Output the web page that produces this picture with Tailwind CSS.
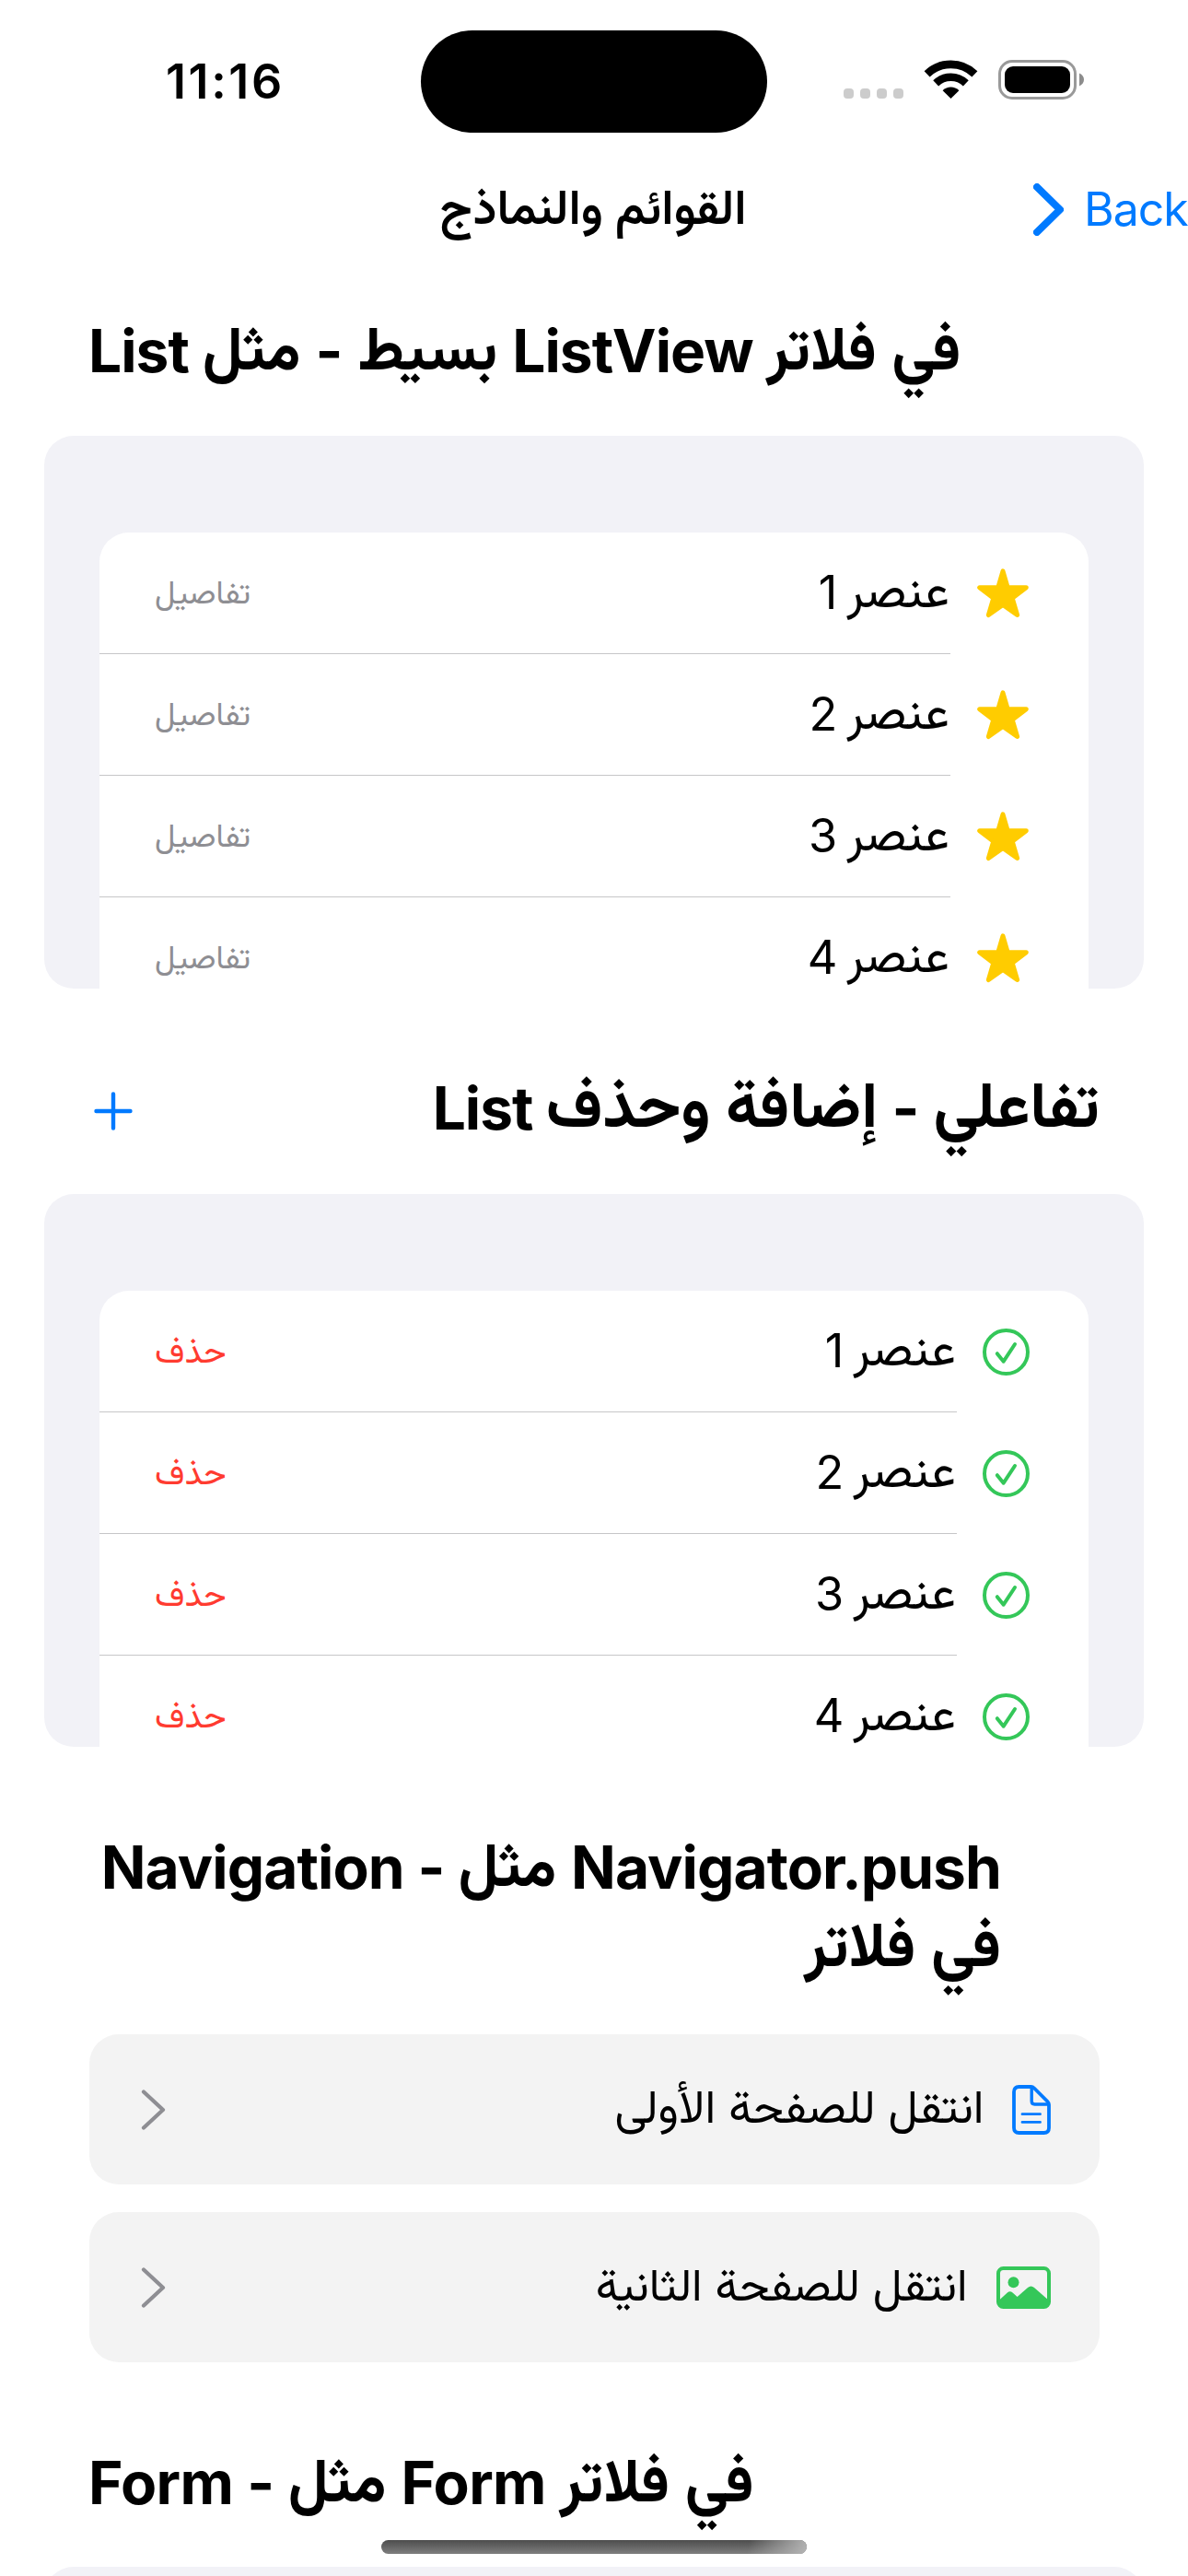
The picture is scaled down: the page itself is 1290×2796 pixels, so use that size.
<!DOCTYPE html>
<html lang="ar">
<head>
<meta charset="utf-8">
<title>القوائم والنماذج</title>
<script src="https://cdn.jsdelivr.net/npm/@tailwindcss/browser@4"></script>
</head>
<body class="bg-white">
<div class="relative flex h-[2796px] w-[1290px] flex-col overflow-hidden bg-white font-[Inter,Vazirmatn,'Noto_Sans',sans-serif] text-black">

  <!-- Status bar -->
  <header class="flex h-[177px] shrink-0 items-start">
    <div class="ml-[180px] mt-[58px] w-[277px] text-[52px] font-semibold leading-[62px] tracking-[2.6px]">11:16</div>
    <div class="mt-[33px] h-[111px] w-[376px] rounded-full bg-black"></div>
    <div class="ml-[83px] mt-[96px] flex gap-[7px]">
      <i class="size-[11px] rounded-[4px] bg-[#cccccc]"></i><i class="size-[11px] rounded-[4px] bg-[#cccccc]"></i><i class="size-[11px] rounded-[4px] bg-[#cccccc]"></i><i class="size-[11px] rounded-[4px] bg-[#cccccc]"></i>
    </div>
    <svg class="ml-[22px] mt-[65px] h-[42px] w-[59px]" viewBox="0 0 59 42" fill="none">
      <path d="M3.6 15.4C18 1.4 41 1.4 55.4 15.4" stroke="#000" stroke-width="8.6"/>
      <path d="M13.2 25.4C22.5 16.6 36.5 16.6 45.8 25.4" stroke="#000" stroke-width="8.6"/>
      <path d="M20.6 33.2C25.6 28.2 33.4 28.2 38.4 33.2L29.5 42Z" fill="#000"/>
    </svg>
    <svg class="ml-[22px] mt-[65px] h-[43px] w-[95px]" viewBox="0 0 95 43" fill="none">
      <rect x="1.5" y="1.5" width="82" height="40" rx="13.5" stroke="#999" stroke-width="3"/>
      <rect x="7" y="7" width="71" height="29" rx="9" fill="#000"/>
      <path d="M88 14.6C91.300 16 93 18.700 93 21.500S91.300 27 88 28.400Z" fill="#8c8c8c"/>
    </svg>
  </header>

  <!-- Navigation bar -->
  <nav class="grid h-[132px] shrink-0 grid-cols-[447px_394px_449px] items-start">
    <span></span>
    <h1 dir="rtl" class="mt-[12px] text-center text-[52.600px] font-semibold leading-[70px] whitespace-nowrap">القوائم والنماذج</h1>
    <a class="flex items-center pl-[281px] pt-[20px] text-[#007aff]">
      <svg class="h-[57px] w-[33px] shrink-0" viewBox="0 0 33 57" fill="none" stroke="#007aff" stroke-width="8" stroke-linecap="round" stroke-linejoin="round"><path d="M4 4L29 28.500L4 53"/></svg>
      <span class="ml-[22px] text-[50px] leading-[60px] tracking-[-1px]">Back</span>
    </a>
  </nav>

  <main class="flex flex-col px-[48px] pt-[29px]">
    <h2 dir="ltr" class="h-[87px] pl-[48px] text-[64px] font-bold leading-[86px] tracking-[-1px] whitespace-nowrap [word-spacing:0.800px]">List <span class="align-[3px] text-[66.500px] leading-[60px] tracking-normal">بسيط</span> - <span class="align-[3px] text-[66.500px] leading-[60px] tracking-normal">مثل</span> ListView <span class="align-[3px] text-[66.500px] leading-[60px] tracking-normal">في فلاتر</span></h2>

    <section id="stars" class="mt-[48px] h-[600px] overflow-hidden rounded-[32px] bg-[#f2f2f7] px-[60px] pt-[105px]">
      <ul dir="rtl" class="rounded-t-[32px] bg-white"></ul>
    </section>

    <div class="mt-[87px] flex h-[87px] items-center justify-between pl-[54px] pr-[48px]">
      <svg class="mt-[5px] size-[42px]" viewBox="0 0 42 42" stroke="#007aff" stroke-width="4.400" stroke-linecap="round"><path d="M2.500 21H39.500M21 2.500V39.500"/></svg>
      <h2 dir="ltr" class="h-[87px] text-[64px] font-bold leading-[86px] tracking-[-1px] whitespace-nowrap">List <span class="align-[3px] text-[69.500px] leading-[60px] tracking-normal">تفاعلي</span> - <span class="align-[3px] text-[69.500px] leading-[60px] tracking-normal">إضافة وحذف</span></h2>
    </div>

    <section id="checks" class="mt-[49px] h-[600px] overflow-hidden rounded-[32px] bg-[#f2f2f7] px-[60px] pt-[105px]">
      <ul dir="rtl" class="rounded-t-[32px] bg-white"></ul>
    </section>

    <h2 dir="ltr" class="mt-[87px] h-[174px] w-[1039px] text-right text-[64px] font-bold leading-[87px] tracking-[-0.900px] whitespace-nowrap [word-spacing:0.600px]">Navigation - <span class="align-[3px] text-[66.500px] leading-[60px] tracking-normal">مثل</span> Navigator.push<br><span class="align-[3px] text-[67.500px] leading-[60px] tracking-normal">في فلاتر</span></h2>

    <div class="mx-[48.500px] mt-[51px] flex flex-col gap-[30px]">
      <a dir="rtl" class="flex h-[163px] items-center rounded-[32px] bg-[#f3f3f3] pl-[56px] pr-[53px]">
        <svg class="h-[54px] w-[42px]" viewBox="0 0 42 54" fill="none" stroke="#007aff" stroke-linecap="round" stroke-linejoin="round">
          <path d="M7.500 2H20.500Q22.500 2 24 3.500L38.500 18Q40 19.500 40 21.500V46.500Q40 52 34.500 52H7.500Q2 52 2 46.500V7.500Q2 2 7.500 2Z" stroke-width="3.800"/>
          <path d="M21.200 3V17.500Q21.200 21 24.500 21H39" stroke-width="3.400"/>
          <path d="M11 31.700H30.500M11 40.400H30.500" stroke-width="2.800"/>
        </svg>
        <span class="mr-[30px] grow pb-[7px] text-[50.300px] leading-[70px]">انتقل للصفحة الأولى</span>
        <svg class="h-[44px] w-[27px]" viewBox="0 0 27 44" fill="none" stroke="#8e8e93" stroke-width="4.200" stroke-linecap="round" stroke-linejoin="round"><path d="M3 2.500L24 22L3 41.500"/></svg>
      </a>
      <a dir="rtl" class="flex h-[163px] items-center rounded-[32px] bg-[#f3f3f3] pl-[56px] pr-[53px]">
        <svg class="h-[46px] w-[59px]" viewBox="0 0 59 46" fill="none">
          <rect x="2" y="2" width="55" height="42" rx="5.500" stroke="#34c759" stroke-width="4"/>
          <circle cx="18.500" cy="17.300" r="6" fill="#34c759"/>
          <path d="M2 37.500L11.800 28.400Q14.700 26 17.600 28.400L22.600 33L34 23Q37.500 20 41 23L57 37V40Q57 44 53 44H6Q2 44 2 40Z" fill="#34c759"/>
        </svg>
        <span class="mr-[31px] grow pb-[7px] text-[49.700px] leading-[70px]">انتقل للصفحة الثانية</span>
        <svg class="h-[44px] w-[27px]" viewBox="0 0 27 44" fill="none" stroke="#8e8e93" stroke-width="4.200" stroke-linecap="round" stroke-linejoin="round"><path d="M3 2.500L24 22L3 41.500"/></svg>
      </a>
    </div>

    <h2 dir="ltr" class="mt-[87px] h-[87px] pl-[48px] text-[64px] font-bold leading-[87px] tracking-[-0.700px] whitespace-nowrap [word-spacing:0.800px]">Form - <span class="align-[3px] text-[66.500px] leading-[60px] tracking-normal">مثل</span> Form <span class="align-[3px] text-[66.500px] leading-[60px] tracking-normal">في فلاتر</span></h2>
    <section class="mt-[48px] h-[600px] shrink-0 rounded-[32px] bg-[#f2f2f7]"></section>
  </main>

  <!-- Home indicator -->
  <div class="absolute left-[414px] top-[2757px] h-[15px] w-[462px] overflow-hidden rounded-full bg-linear-to-b from-[#4d4d4d] to-[#7f7f7f]">
    <div class="ml-auto h-full w-[90px] bg-linear-[100deg] from-transparent from-30% to-[#b4b4b4]"></div>
  </div>
</div>

<template id="star-row">
  <li class="relative flex h-[132px] items-center pl-[60px] pr-[65px]">
    <svg class="h-[54px] w-[56px]" viewBox="0 0 56 54" fill="#ffcc00" stroke="#ffcc00" stroke-width="5" stroke-linejoin="round"><path d="M28 2.900L33.200 20.700H53.300L38.200 32.200L43.600 50.500L28 39.400L12.400 50.500L17.800 32.200L2.700 20.700H22.800Z"/></svg>
    <span class="mr-[30px] h-[72px] grow text-[50.500px] leading-[70px] [word-spacing:-4px]"><span class="align-[2px] text-[53px] leading-[50px]">عنصر</span> <b class="font-normal"></b></span>
    <span class="pb-[4px] text-[35px] leading-[50px] text-[#8e8e93]">تفاصيل</span>
    <hr class="absolute bottom-0 left-0 right-[150px] h-px border-0 bg-[#c6c6c8]">
  </li>
</template>
<template id="check-row">
  <li class="relative flex h-[132px] items-center pl-[60px] pr-[64px]">
    <svg class="size-[51px]" viewBox="0 0 51 51" fill="none" stroke="#34c759" stroke-width="4" stroke-linecap="round" stroke-linejoin="round"><circle cx="25.500" cy="25.500" r="23.500"/><path d="M15.800 27.200L22.700 35.700L35 17"/></svg>
    <span class="mr-[29px] h-[72px] grow text-[50.500px] leading-[70px] [word-spacing:-4px]"><span class="align-[2px] text-[53px] leading-[50px]">عنصر</span> <b class="font-normal"></b></span>
    <span class="pb-[3px] text-[37.500px] leading-[50px] text-[#ff3b30]">حذف</span>
    <hr class="absolute bottom-0 left-0 right-[143px] h-px border-0 bg-[#c6c6c8]">
  </li>
</template>
<script>
  for (const [list, row] of [['stars', 'star-row'], ['checks', 'check-row']]) {
    for (let n = 1; n <= 4; n++) {
      const item = document.getElementById(row).content.cloneNode(true);
      item.querySelector('b').textContent = n;
      document.querySelector('#' + list + ' ul').append(item);
    }
  }
</script>
</body>
</html>
